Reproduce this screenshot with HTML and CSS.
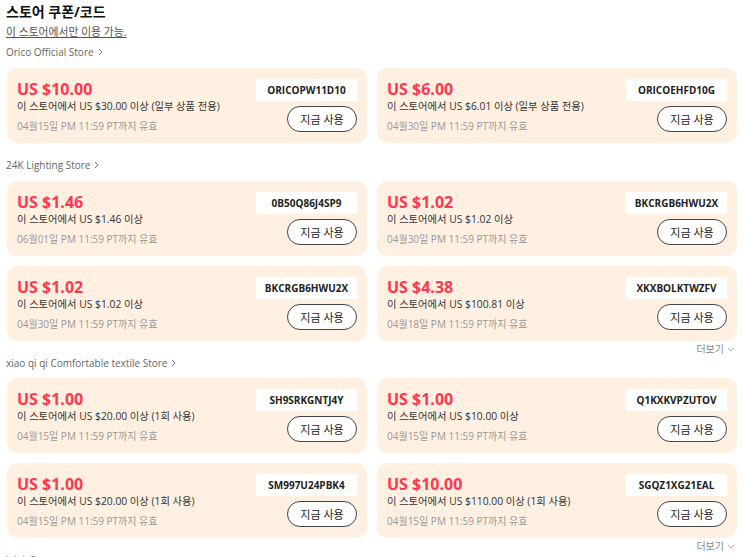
FILE: index.html
```html
<!DOCTYPE html>
<html lang="ko">
<head>
<meta charset="utf-8">
<title>스토어 쿠폰/코드</title>
<link rel="stylesheet" href="styles.css">
</head>
<body>
<div class="page">
  <h1 class="title">스토어 쿠폰/코드</h1>
  <div class="subtitle">이 스토어에서만 이용 가능.</div>

  <div class="store first">Orico Official Store <svg class="chev-r" viewBox="0 0 5 8" width="5" height="8"><path d="M1 1l3 3-3 3" fill="none" stroke="#777" stroke-width="1"/></svg></div>
  <div class="grid">
    <div class="card"><div class="info"><div class="price">US $10.00</div><div class="cond">이 스토어에서 US $30.00 이상 (일부 상품 전용)</div><div class="date">04월15일 PM 11:59 PT까지 유효</div></div><div class="actions"><div class="code">ORICOPW11D10</div><button class="use">지금 사용</button></div></div>
    <div class="card"><div class="info"><div class="price">US $6.00</div><div class="cond">이 스토어에서 US $6.01 이상 (일부 상품 전용)</div><div class="date">04월30일 PM 11:59 PT까지 유효</div></div><div class="actions"><div class="code">ORICOEHFD10G</div><button class="use">지금 사용</button></div></div>
  </div>

  <div class="store">24K Lighting Store <svg class="chev-r" viewBox="0 0 5 8" width="5" height="8"><path d="M1 1l3 3-3 3" fill="none" stroke="#777" stroke-width="1"/></svg></div>
  <div class="grid">
    <div class="card"><div class="info"><div class="price">US $1.46</div><div class="cond">이 스토어에서 US $1.46 이상</div><div class="date">06월01일 PM 11:59 PT까지 유효</div></div><div class="actions"><div class="code">0B50Q86J4SP9</div><button class="use">지금 사용</button></div></div>
    <div class="card"><div class="info"><div class="price">US $1.02</div><div class="cond">이 스토어에서 US $1.02 이상</div><div class="date">04월30일 PM 11:59 PT까지 유효</div></div><div class="actions"><div class="code">BKCRGB6HWU2X</div><button class="use">지금 사용</button></div></div>
    <div class="card"><div class="info"><div class="price">US $1.02</div><div class="cond">이 스토어에서 US $1.02 이상</div><div class="date">04월30일 PM 11:59 PT까지 유효</div></div><div class="actions"><div class="code">BKCRGB6HWU2X</div><button class="use">지금 사용</button></div></div>
    <div class="card"><div class="info"><div class="price">US $4.38</div><div class="cond">이 스토어에서 US $100.81 이상</div><div class="date">04월18일 PM 11:59 PT까지 유효</div></div><div class="actions"><div class="code">XKXBOLKTWZFV</div><button class="use">지금 사용</button></div></div>
  </div>
  <div class="more">더보기 <svg class="chev-d" viewBox="0 0 8 5" width="8" height="5"><path d="M1 1l3 3 3-3" fill="none" stroke="#aaa" stroke-width="1"/></svg></div>

  <div class="store after-more">xiao qi qi Comfortable textile Store <svg class="chev-r" viewBox="0 0 5 8" width="5" height="8"><path d="M1 1l3 3-3 3" fill="none" stroke="#777" stroke-width="1"/></svg></div>
  <div class="grid">
    <div class="card"><div class="info"><div class="price">US $1.00</div><div class="cond">이 스토어에서 US $20.00 이상 (1회 사용)</div><div class="date">04월15일 PM 11:59 PT까지 유효</div></div><div class="actions"><div class="code">SH9SRKGNTJ4Y</div><button class="use">지금 사용</button></div></div>
    <div class="card"><div class="info"><div class="price">US $1.00</div><div class="cond">이 스토어에서 US $10.00 이상</div><div class="date">04월15일 PM 11:59 PT까지 유효</div></div><div class="actions"><div class="code">Q1KXKVPZUTOV</div><button class="use">지금 사용</button></div></div>
    <div class="card"><div class="info"><div class="price">US $1.00</div><div class="cond">이 스토어에서 US $20.00 이상 (1회 사용)</div><div class="date">04월15일 PM 11:59 PT까지 유효</div></div><div class="actions"><div class="code">SM997U24PBK4</div><button class="use">지금 사용</button></div></div>
    <div class="card"><div class="info"><div class="price">US $10.00</div><div class="cond">이 스토어에서 US $110.00 이상 (1회 사용)</div><div class="date">04월15일 PM 11:59 PT까지 유효</div></div><div class="actions"><div class="code">SGQZ1XG21EAL</div><button class="use">지금 사용</button></div></div>
  </div>
  <div class="more">더보기 <svg class="chev-d" viewBox="0 0 8 5" width="8" height="5"><path d="M1 1l3 3 3-3" fill="none" stroke="#aaa" stroke-width="1"/></svg></div>

  <div class="store after-more">lalak Store <svg class="chev-r" viewBox="0 0 5 8" width="5" height="8"><path d="M1 1l3 3-3 3" fill="none" stroke="#777" stroke-width="1"/></svg></div>
</div>
</body>
</html>
```

FILE: styles.css
```css
* { box-sizing: border-box; }
html, body { margin: 0; padding: 0; background: #fff; }
body {
  font-family: "Open Sans", "Noto Sans CJK KR", sans-serif;
  color: #222;
  font-size: 10px;
}
.page { padding: 2px 6px 0 7px; }
.title {
  margin: 0 0 0 -1px;
  font-size: 14px;
  font-weight: 700;
  line-height: 20px;
  color: #111;
}
.subtitle {
  margin: 2px 0 0 -1px;
  font-size: 10.8px;
  line-height: 16px;
  color: #555;
  text-decoration: underline;
}
.store {
  margin: 14px 0 8px -1px;
  line-height: 16px;
  color: #666;
  display: flex;
  align-items: center;
}
.store.first { margin-top: 4px; }
.store.after-more { margin-top: 0; margin-bottom: 7px; }
.chev-r { margin-left: 4px; }
.grid {
  display: grid;
  grid-template-columns: 1fr 1fr;
  gap: 10px;
}
.card {
  background: #fff0e1;
  border-radius: 10px;
  padding: 11px 10px 10px 10px;
  display: flex;
  justify-content: space-between;
}
.info { display: flex; flex-direction: column; }
.price {
  font-size: 16px;
  font-weight: 700;
  line-height: 20px;
  color: #fd384f;
}
.cond { line-height: 14px; color: #333; font-size: 10.3px; }
.date { line-height: 14px; margin-top: 6px; color: #999; }
.actions {
  display: flex;
  flex-direction: column;
  align-items: flex-end;
  gap: 5px;
}
.code {
  width: 101px;
  height: 22px;
  background: #fff;
  display: flex;
  align-items: center;
  justify-content: center;
  font-size: 10px;
  font-weight: 700;
  color: #222;
}
.use {
  width: 70px;
  height: 26px;
  border: 1px solid #444;
  border-radius: 13px;
  background: #fff;
  font-family: "Open Sans", "Noto Sans CJK KR", sans-serif;
  font-size: 11px;
  color: #222;
  padding: 0;
}
.more {
  margin-top: 2px;
  line-height: 12px;
  color: #888;
  display: flex;
  justify-content: flex-end;
  align-items: center;
  gap: 3px;
  padding-right: 2px;
}
```
